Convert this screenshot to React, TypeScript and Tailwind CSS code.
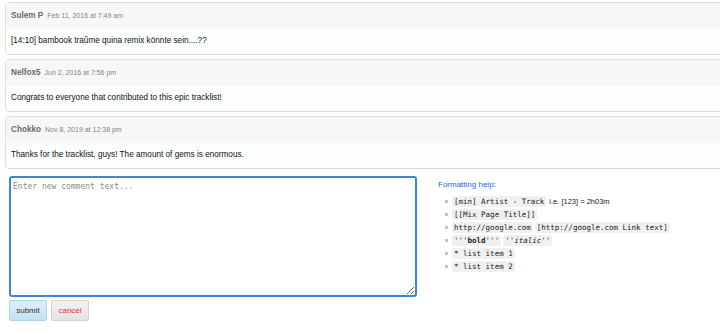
import React from "react";

const comments = [
  { name: "Sulem P", date: "Feb 11, 2016 at 7:49 am", text: "[14:10] bambook traûme quina remix könnte sein....??" },
  { name: "Nelfox5", date: "Jun 2, 2016 at 7:56 pm", text: "Congrats to everyone that contributed to this epic tracklist!" },
  { name: "Chokko", date: "Nov 8, 2019 at 12:38 pm", text: "Thanks for the tracklist, guys! The amount of gems is enormous." },
];

const sans = "font-['Liberation_Sans',Arial,sans-serif]";
const mono = "font-['DejaVu_Sans_Mono','Liberation_Mono',monospace]";

function Chip({ children }: { children: React.ReactNode }) {
  return (
    <code className={`${mono} text-[7.5px] leading-[11px] bg-[#f0f0f0] text-[#1a1a1a] px-[2px] py-0 rounded-[2px] inline-block`}>
      {children}
    </code>
  );
}

export default function App() {
  return (
    <div className={`w-[720px] h-[334px] overflow-hidden bg-white ${sans}`}>
      <div className="pt-[2px] pl-[5px] flex flex-col gap-[4px]">
        {comments.map((c) => (
          <div key={c.name} className="w-[740px] border border-[#dcdcdc] rounded-[4px] overflow-hidden">
            <div className="h-[26px] bg-[#f7f7f7] flex items-center px-[5px] gap-[4px]">
              <span className="text-[8.2px] font-bold text-[#6a6a6a]">{c.name}</span>
              <span className="text-[7px] text-[#858585]">{c.date}</span>
            </div>
            <div className="h-[25px] bg-[#fcfefe] flex items-center px-[5px]">
              <span className="text-[8.2px] text-[#111]">{c.text}</span>
            </div>
          </div>
        ))}
      </div>
      <div className="flex mt-[7px] pl-[9px]">
        <div className="flex flex-col">
          <textarea
            placeholder="Enter new comment text..."
            className={`w-[408px] h-[121px] border-2 border-[#3d84dc] rounded-[3px] outline-none resize-y px-[2px] py-[4px] ${mono} text-[8px] leading-[10px] placeholder:text-[#8c8c8c]`}
          />
          <div className="flex gap-[4px] mt-[3px]">
            <button className="w-[38px] h-[21px] rounded-[2px] border border-[#afd3ea] bg-gradient-to-b from-[#dcf0fb] to-[#c3e1f2] text-[8px] text-[#333]">
              submit
            </button>
            <button className="w-[38px] h-[21px] rounded-[2px] border border-[#d2d2d2] bg-gradient-to-b from-[#f2f2f2] to-[#e3e3e3] text-[8px] text-[#d9383a]">
              cancel
            </button>
          </div>
        </div>
        <div className="ml-[21px] pt-[3px]">
          <div className="text-[8px] leading-[12px]">
            <span className="text-[#1a66e0]">Formatting help</span>
            <span className="text-[#333]">:</span>
          </div>
          <ul className="mt-[4px] pl-[7px] flex flex-col">
            {[
              <>
                <Chip>[min] Artist - Track</Chip>
                <span className="text-[7.5px] text-[#222] ml-[3px]">i.e. [123] = 2h03m</span>
              </>,
              <Chip>[[Mix Page Title]]</Chip>,
              <>
                <Chip>http://google.com</Chip>
                <span className="ml-[2px]" />
                <Chip>[http://google.com Link text]</Chip>
              </>,
              <>
                <Chip>
                  '''<b>bold</b>'''
                </Chip>
                <span className="ml-[2px]" />
                <Chip>
                  ''<i>italic</i>''
                </Chip>
              </>,
              <Chip>* list item 1</Chip>,
              <Chip>* list item 2</Chip>,
            ].map((item, i) => (
              <li key={i} className="h-[13px] flex items-center">
                <span className="w-[3px] h-[3px] bg-[#c4c4c4] mr-[4px] shrink-0" />
                {item}
              </li>
            ))}
          </ul>
        </div>
      </div>
    </div>
  );
}
